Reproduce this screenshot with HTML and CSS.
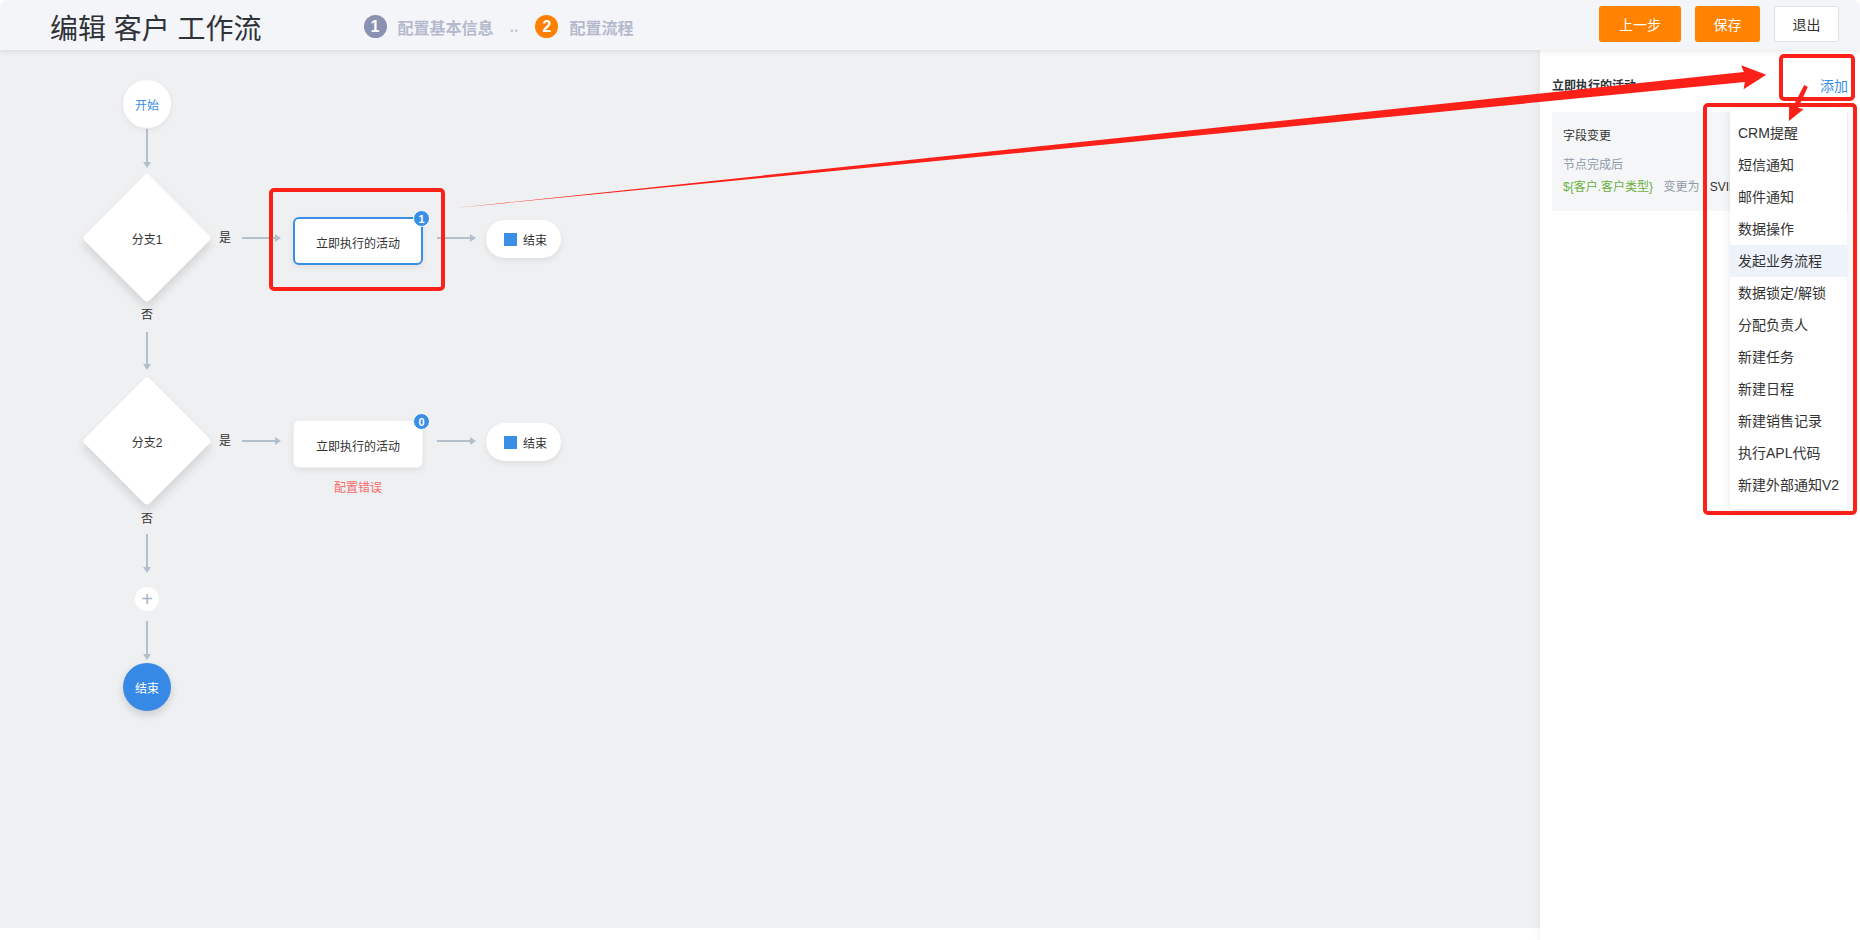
FILE: index.html
```html
<!DOCTYPE html>
<html lang="zh-CN">
<head>
  <meta charset="UTF-8">
  <title>编辑 客户 工作流</title>
  <link rel="stylesheet" href="styles.css">
</head>
<body>
  <div class="app">
    <header class="topbar">
      <h1 class="title">编辑 客户 工作流</h1>
      <div class="steps">
        <span class="step-num done">1</span>
        <span class="step-text">配置基本信息</span>
        <span class="step-dots">..</span>
        <span class="step-num current">2</span>
        <span class="step-text">配置流程</span>
      </div>
      <div class="actions">
        <button class="btn btn-orange btn-wide">上一步</button>
        <button class="btn btn-orange">保存</button>
        <button class="btn btn-plain">退出</button>
      </div>
    </header>

    <div class="main">
      <div class="canvas">
        <!-- connectors -->
        <svg class="wires" width="1540" height="878">
          <g stroke="#b4bfcc" stroke-width="2">
            <line x1="147" y1="79" x2="147" y2="113"/>
            <line x1="242" y1="188" x2="276" y2="188"/>
            <line x1="437" y1="188" x2="471" y2="188"/>
            <line x1="147" y1="282" x2="147" y2="315"/>
            <line x1="242" y1="391" x2="276" y2="391"/>
            <line x1="437" y1="391" x2="471" y2="391"/>
            <line x1="147" y1="484" x2="147" y2="518"/>
            <line x1="147" y1="571" x2="147" y2="605"/>
          </g>
          <g fill="#b4bfcc">
            <polygon points="143,112 151,112 147,118"/>
            <polygon points="275,184 275,192 281,188"/>
            <polygon points="470,184 470,192 476,188"/>
            <polygon points="143,314 151,314 147,320"/>
            <polygon points="275,387 275,395 281,391"/>
            <polygon points="470,387 470,395 476,391"/>
            <polygon points="143,517 151,517 147,523"/>
            <polygon points="143,604 151,604 147,610"/>
          </g>
        </svg>

        <div class="node start">开始</div>

        <div class="branch b1"><span>分支1</span></div>
        <span class="label yes1">是</span>
        <div class="task active t1">立即执行的活动<span class="badge">1</span></div>
        <div class="pill p1"><i class="sq"></i>结束</div>
        <span class="label no1">否</span>

        <div class="branch b2"><span>分支2</span></div>
        <span class="label yes2">是</span>
        <div class="task t2">立即执行的活动<span class="badge">0</span></div>
        <span class="error">配置错误</span>
        <div class="pill p2"><i class="sq"></i>结束</div>
        <span class="label no2">否</span>

        <div class="node plus">+</div>
        <div class="node finish">结束</div>
      </div>

      <aside class="panel">
        <div class="panel-head">
          <span class="panel-title">立即执行的活动</span>
          <a class="add-link">添加</a>
        </div>
        <div class="action-card">
          <div class="card-line">字段变更</div>
          <div class="card-line muted">节点完成后</div>
          <div class="card-line">
            <span class="var">${客户.客户类型}</span>
            <span class="muted">变更为</span>
            <span>SVIP</span>
          </div>
        </div>

        <ul class="dropdown">
          <li>CRM提醒</li>
          <li>短信通知</li>
          <li>邮件通知</li>
          <li>数据操作</li>
          <li class="hover">发起业务流程</li>
          <li>数据锁定/解锁</li>
          <li>分配负责人</li>
          <li>新建任务</li>
          <li>新建日程</li>
          <li>新建销售记录</li>
          <li>执行APL代码</li>
          <li>新建外部通知V2</li>
        </ul>
      </aside>
    </div>
  </div>

  <!-- red markup drawn over the screenshot -->
  <svg class="marks" width="1860" height="940">
    <g fill="none" stroke="#fb2118" stroke-width="4">
      <rect x="271" y="190" width="172" height="99" rx="3"/>
      <rect x="1781" y="56" width="72" height="43" rx="3"/>
      <rect x="1705" y="105" width="150" height="408" rx="3"/>
    </g>
    <g fill="#fb2118">
      <polygon transform="translate(455,208) rotate(-5.8)" points="0,0 1296,-5 1294,-12 1318,0 1294,12 1296,5"/>
      <polygon transform="translate(1806,86) rotate(116)" points="0,-2 23,-2.5 22,-8 39,0 22,8 23,2.5 0,2"/>
    </g>
  </svg>
</body>
</html>
```

FILE: styles.css
```css
* {
  margin: 0;
  padding: 0;
  box-sizing: border-box;
}
body {
  font-family: "Liberation Sans", "Noto Sans CJK SC", sans-serif;
  background-color: #ffffff;
  color: #333333;
  width: 1860px;
  height: 940px;
  overflow: hidden;
  position: relative;
}
.app {
  display: flex;
  flex-direction: column;
  height: 100%;
}

/* top bar */
.topbar {
  height: 50px;
  display: flex;
  align-items: center;
  padding: 3px 21px 0 50px;
  background-color: #f4f5f8;
  border-top-left-radius: 8px;
  border-top-right-radius: 8px;
  box-shadow: 0 2px 4px rgba(0, 0, 0, 0.08);
  position: relative;
  z-index: 2;
}
.title {
  font-size: 28px;
  font-weight: 400;
  color: #2f3338;
}
.steps {
  display: flex;
  align-items: center;
  margin-left: 102px;
  font-size: 16px;
  font-weight: 700;
}
.step-num {
  width: 23px;
  height: 23px;
  border-radius: 50%;
  color: #ffffff;
  font-size: 16px;
  display: flex;
  align-items: center;
  justify-content: center;
  margin-right: 11px;
}
.step-num.done {
  background-color: #8a91b1;
}
.step-num.current {
  background-color: #ff8000;
}
.step-text {
  color: #b5b9cd;
}
.step-dots {
  color: #c4c8d6;
  margin: 0 17px 0 16px;
}
.actions {
  margin-left: auto;
  display: flex;
  gap: 14px;
  margin-top: -5px;
}
.btn {
  height: 36px;
  width: 65px;
  border-radius: 3px;
  font-size: 14px;
  font-family: inherit;
  border: 1px solid transparent;
}
.btn-wide {
  width: 82px;
}
.btn-orange {
  background-color: #ff8200;
  color: #ffffff;
}
.btn-plain {
  background-color: #ffffff;
  border-color: #dcdfe6;
  color: #333333;
}

/* body area */
.main {
  display: flex;
  height: 878px;
}
.canvas {
  flex: 1;
  background-color: #eff0f2;
  position: relative;
}
.wires {
  position: absolute;
  left: 0;
  top: 0;
}
.node {
  position: absolute;
  border-radius: 50%;
  display: flex;
  align-items: center;
  justify-content: center;
  font-size: 12px;
}
.start {
  left: 123px;
  top: 30px;
  width: 48px;
  height: 48px;
  background-color: #ffffff;
  color: #3a8ee6;
  box-shadow: 0 2px 6px rgba(0, 0, 0, 0.06);
}
.plus {
  left: 135px;
  top: 537px;
  width: 24px;
  height: 24px;
  background-color: #ffffff;
  color: #aab4c2;
  font-size: 20px;
  font-weight: 300;
  line-height: 1;
}
.finish {
  left: 123px;
  top: 613px;
  width: 48px;
  height: 48px;
  background-color: #3689e4;
  color: #ffffff;
  box-shadow: 0 4px 8px rgba(0, 0, 0, 0.15);
}
.branch {
  position: absolute;
  left: 82px;
  width: 130px;
  height: 130px;
  display: flex;
  align-items: center;
  justify-content: center;
  font-size: 12px;
  color: #333333;
}
.branch::before {
  content: "";
  position: absolute;
  left: 19px;
  top: 19px;
  width: 92px;
  height: 92px;
  background-color: #ffffff;
  border-radius: 4px;
  transform: rotate(45deg);
  box-shadow: 4px 4px 10px rgba(0, 0, 0, 0.12);
}
.branch span {
  position: relative;
}
.b1 {
  top: 123px;
}
.b2 {
  top: 326px;
}
.label {
  position: absolute;
  font-size: 12px;
  color: #333333;
  width: 20px;
  text-align: center;
  line-height: 16px;
}
.yes1 { left: 215px; top: 180px; }
.yes2 { left: 215px; top: 383px; }
.no1 { left: 137px; top: 257px; }
.no2 { left: 137px; top: 461px; }

.task {
  position: absolute;
  left: 293px;
  width: 130px;
  height: 48px;
  background-color: #ffffff;
  border-radius: 6px;
  border: 1px solid #f0f1f3;
  display: flex;
  align-items: center;
  justify-content: center;
  padding-top: 3px;
  font-size: 12px;
  color: #333333;
  box-shadow: 0 2px 6px rgba(0, 0, 0, 0.08);
}
.task.active {
  border: 2px solid #3a8ee6;
}
.t1 { top: 167px; }
.t2 { top: 370px; }
.badge {
  position: absolute;
  right: -8px;
  top: -8px;
  width: 17px;
  height: 17px;
  border-radius: 50%;
  background-color: #3a8ee6;
  border: 1px solid #ffffff;
  color: #ffffff;
  font-size: 11px;
  font-weight: 700;
  display: flex;
  align-items: center;
  justify-content: center;
}
.task.active .badge {
  right: -9px;
  top: -9px;
}
.error {
  position: absolute;
  left: 318px;
  top: 428px;
  width: 80px;
  text-align: center;
  font-size: 12px;
  color: #f56c6c;
}
.pill {
  position: absolute;
  left: 486px;
  width: 75px;
  height: 38px;
  border-radius: 19px;
  background-color: #ffffff;
  display: flex;
  align-items: center;
  padding-left: 18px;
  gap: 6px;
  font-size: 12px;
  color: #333333;
  box-shadow: 0 3px 6px rgba(0, 0, 0, 0.07);
}
.p1 { top: 170px; }
.p2 { top: 373px; }
.sq {
  width: 13px;
  height: 13px;
  background-color: #3a8ee6;
}

/* right panel */
.panel {
  width: 320px;
  background-color: #ffffff;
  padding: 20px 12px;
  position: relative;
  height: 890px;
  box-shadow: -2px 0 6px rgba(0, 0, 0, 0.05);
}
.panel-head {
  height: 28px;
  display: flex;
  align-items: center;
  justify-content: space-between;
}
.panel-title {
  font-size: 12px;
  font-weight: 700;
  color: #2f3338;
}
.add-link {
  font-size: 14px;
  color: #3a8ee6;
  margin-top: 1px;
}
.action-card {
  margin-top: 14px;
  background-color: #f5f6f8;
  padding: 14px 11px;
}
.card-line {
  font-size: 12px;
  line-height: 20px;
  color: #333333;
  white-space: nowrap;
}
.card-line + .card-line {
  margin-top: 9px;
}
.card-line + .card-line + .card-line {
  margin-top: 2px;
}
.card-line span {
  margin-right: 7px;
}
.muted {
  color: #8f99a8;
}
.var {
  color: #6ab13f;
}
.dropdown {
  position: absolute;
  left: 190px;
  top: 59px;
  width: 117px;
  list-style: none;
  background-color: #ffffff;
  border-radius: 4px;
  padding: 8px 0;
  box-shadow: 0 2px 10px rgba(0, 0, 0, 0.1);
}
.dropdown::before {
  content: "";
  position: absolute;
  right: 10px;
  top: -5px;
  border-left: 5px solid transparent;
  border-right: 5px solid transparent;
  border-bottom: 5px solid #ffffff;
}
.dropdown li {
  height: 32px;
  line-height: 32px;
  padding: 0 8px;
  font-size: 14px;
  color: #333333;
  white-space: nowrap;
}
.dropdown li.hover {
  background-color: #eef2fa;
}

/* annotation overlay */
.marks {
  position: absolute;
  left: 0;
  top: 0;
  pointer-events: none;
  z-index: 5;
}
```
